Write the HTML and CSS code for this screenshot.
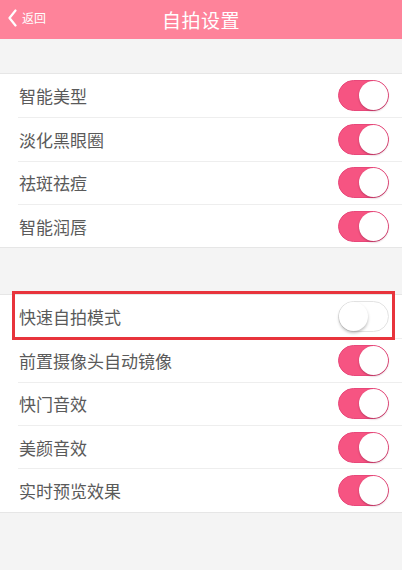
FILE: index.html
```html
<!DOCTYPE html>
<html lang="zh-CN">
<head>
    <meta charset="UTF-8">
    <meta name="viewport" content="width=device-width, initial-scale=1.0">
    <title>自拍设置</title>
    <link rel="stylesheet" href="styles.css">
</head>
<body>
    <div class="page">
        <div class="nav">
            <div class="back">
                <svg width="10" height="18" viewBox="0 0 10 18"><polyline points="7.5,1.5 1.5,9 7.5,16.5" fill="none" stroke="#fff" stroke-width="2.2" stroke-linecap="round" stroke-linejoin="round"/></svg>
                <span>返回</span>
            </div>
            <div class="title">自拍设置</div>
        </div>

        <div class="group first">
            <div class="row"><span>智能美型</span><div class="switch on"></div></div>
            <div class="row"><span>淡化黑眼圈</span><div class="switch on"></div></div>
            <div class="row"><span>祛斑祛痘</span><div class="switch on"></div></div>
            <div class="row"><span>智能润唇</span><div class="switch on"></div></div>
        </div>

        <div class="group second">
            <div class="row marked"><span>快速自拍模式</span><div class="switch"></div></div>
            <div class="row"><span>前置摄像头自动镜像</span><div class="switch on"></div></div>
            <div class="row"><span>快门音效</span><div class="switch on"></div></div>
            <div class="row"><span>美颜音效</span><div class="switch on"></div></div>
            <div class="row"><span>实时预览效果</span><div class="switch on"></div></div>
        </div>
    </div>
</body>
</html>
```

FILE: styles.css
```css
body {
    margin: 0;
    padding: 0;
    background-color: #fff;
    font-family: "Noto Sans CJK SC", "Noto Sans", sans-serif;
}
.page {
    width: 402px;
    height: 570px;
    background-color: #f4f4f4;
    overflow: hidden;
}
.nav {
    height: 39px;
    background-color: #fe839a;
    position: relative;
    display: flex;
    align-items: center;
    justify-content: center;
}
.nav .back {
    position: absolute;
    left: 8px;
    top: 9px;
    display: flex;
    align-items: center;
    gap: 4px;
    color: #fff;
    font-size: 12px;
}
.nav .back span {
    line-height: 18px;
}
.nav .title {
    color: #fff;
    font-size: 19px;
    letter-spacing: 0.5px;
    margin-top: -1px;
}
.group {
    background-color: #fff;
    border-top: 1px solid #e6e6e6;
    border-bottom: 1px solid #e6e6e6;
}
.group.first {
    margin-top: 34px;
}
.group.second {
    margin-top: 46px;
}
.row {
    height: 43.3px;
    margin-left: 18px;
    padding-left: 1px;
    padding-right: 13px;
    display: flex;
    align-items: center;
    justify-content: space-between;
    border-top: 1px solid #eeeeee;
    box-sizing: border-box;
    font-size: 17px;
    color: #5a5a5a;
}
.row:first-child {
    border-top: none;
}
.row.marked {
    position: relative;
}
.row.marked::after {
    content: "";
    position: absolute;
    left: -6px;
    right: 7px;
    top: -4px;
    bottom: -2px;
    border: 3px solid #e8343c;
}
.switch {
    width: 51px;
    height: 31px;
    border-radius: 16px;
    background-color: #fff;
    border: 1px solid #e3e3e3;
    box-sizing: border-box;
    position: relative;
}
.switch::before {
    content: "";
    position: absolute;
    top: 0;
    left: 0;
    width: 29px;
    height: 29px;
    border-radius: 50%;
    background-color: #fff;
    box-shadow: 0 2px 3px rgba(0, 0, 0, 0.25);
}
.switch.on {
    background-color: #f65482;
    border-color: #e8487a;
}
.switch.on::before {
    left: auto;
    right: 0;
    box-shadow: 0 1px 2px rgba(120, 20, 60, 0.45);
}
```
